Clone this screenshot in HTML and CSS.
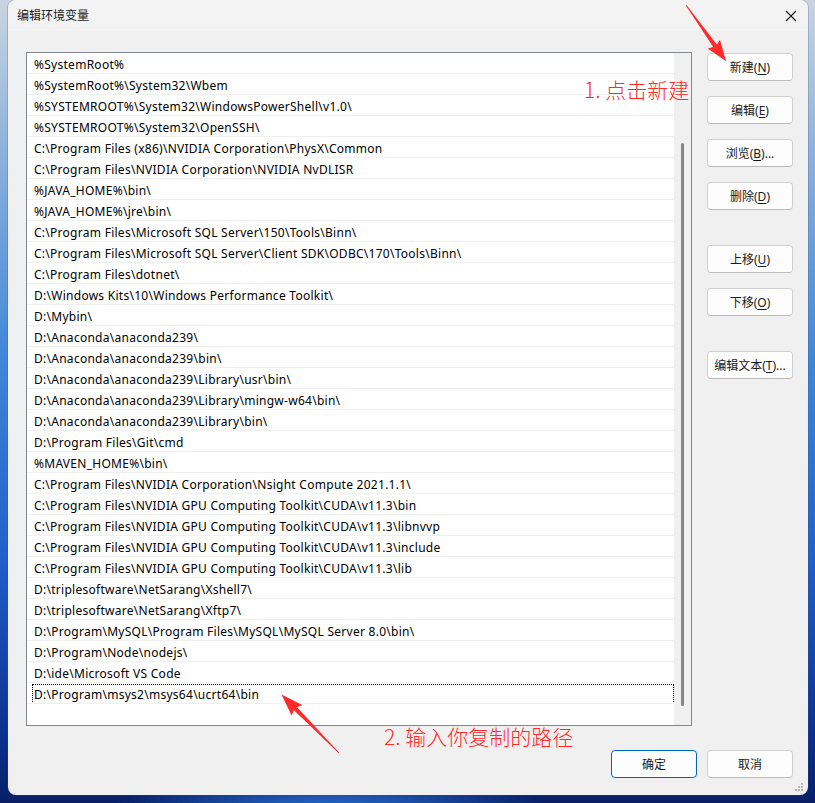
FILE: index.html
```html
<!DOCTYPE html>
<html lang="zh-CN">
<head>
<meta charset="utf-8">
<title>编辑环境变量</title>
<link rel="stylesheet" href="styles.css">
</head>
<body>
<div class="window">
  <div class="titlebar">
    <span class="title">编辑环境变量</span>
    <svg class="close" width="12" height="12" viewBox="0 0 12 12"><path d="M1 1 L11 11 M11 1 L1 11" stroke="#1a1a1a" stroke-width="1.1" fill="none"/></svg>
  </div>
  <div class="content">
    <div class="listbox">
      <ul class="rows">
        <li>%SystemRoot%</li>
        <li>%SystemRoot%\System32\Wbem</li>
        <li>%SYSTEMROOT%\System32\WindowsPowerShell\v1.0\</li>
        <li>%SYSTEMROOT%\System32\OpenSSH\</li>
        <li>C:\Program Files (x86)\NVIDIA Corporation\PhysX\Common</li>
        <li>C:\Program Files\NVIDIA Corporation\NVIDIA NvDLISR</li>
        <li>%JAVA_HOME%\bin\</li>
        <li>%JAVA_HOME%\jre\bin\</li>
        <li>C:\Program Files\Microsoft SQL Server\150\Tools\Binn\</li>
        <li>C:\Program Files\Microsoft SQL Server\Client SDK\ODBC\170\Tools\Binn\</li>
        <li>C:\Program Files\dotnet\</li>
        <li>D:\Windows Kits\10\Windows Performance Toolkit\</li>
        <li>D:\Mybin\</li>
        <li>D:\Anaconda\anaconda239\</li>
        <li>D:\Anaconda\anaconda239\bin\</li>
        <li>D:\Anaconda\anaconda239\Library\usr\bin\</li>
        <li>D:\Anaconda\anaconda239\Library\mingw-w64\bin\</li>
        <li>D:\Anaconda\anaconda239\Library\bin\</li>
        <li>D:\Program Files\Git\cmd</li>
        <li>%MAVEN_HOME%\bin\</li>
        <li>C:\Program Files\NVIDIA Corporation\Nsight Compute 2021.1.1\</li>
        <li>C:\Program Files\NVIDIA GPU Computing Toolkit\CUDA\v11.3\bin</li>
        <li>C:\Program Files\NVIDIA GPU Computing Toolkit\CUDA\v11.3\libnvvp</li>
        <li>C:\Program Files\NVIDIA GPU Computing Toolkit\CUDA\v11.3\include</li>
        <li>C:\Program Files\NVIDIA GPU Computing Toolkit\CUDA\v11.3\lib</li>
        <li>D:\triplesoftware\NetSarang\Xshell7\</li>
        <li>D:\triplesoftware\NetSarang\Xftp7\</li>
        <li>D:\Program\MySQL\Program Files\MySQL\MySQL Server 8.0\bin\</li>
        <li>D:\Program\Node\nodejs\</li>
        <li>D:\ide\Microsoft VS Code</li>
        <li class="selected"><span class="focus">D:\Program\msys2\msys64\ucrt64\bin</span></li>
      </ul>
      <div class="scrollbar"><div class="thumb"></div></div>
    </div>
    <div class="side">
      <button class="btn">新建(<u>N</u>)</button>
      <button class="btn">编辑(<u>E</u>)</button>
      <button class="btn">浏览(<u>B</u>)...</button>
      <button class="btn">删除(<u>D</u>)</button>
      <button class="btn group">上移(<u>U</u>)</button>
      <button class="btn">下移(<u>O</u>)</button>
      <button class="btn group">编辑文本(<u>T</u>)...</button>
    </div>
  </div>
  <div class="footer">
    <button class="btn default">确定</button>
    <button class="btn">取消</button>
  </div>
  <svg class="grip" width="10" height="10" viewBox="0 0 10 10">
    <rect x="7" y="1" width="2" height="2" fill="#b8b8b8"/>
    <rect x="4" y="4" width="2" height="2" fill="#b8b8b8"/>
    <rect x="7" y="4" width="2" height="2" fill="#b8b8b8"/>
    <rect x="1" y="7" width="2" height="2" fill="#b8b8b8"/>
    <rect x="4" y="7" width="2" height="2" fill="#b8b8b8"/>
    <rect x="7" y="7" width="2" height="2" fill="#b8b8b8"/>
  </svg>
</div>

<div class="note note1">1. 点击新建</div>
<div class="note note2">2. 输入你复制的路径</div>
<svg class="arrows" width="815" height="803" viewBox="0 0 815 803">
  <polygon transform="translate(686 5) rotate(54.5)" points="0,-0.4 50,-2.2 48,-7.5 69,0 48,7.5 50,2.2 0,0.4" fill="#ff2a2a"/>
  <polygon transform="translate(339 753) rotate(-134.5)" points="0,-0.4 62,-2.2 60,-7.5 82,0 60,7.5 62,2.2 0,0.4" fill="#ff2a2a"/>
</svg>
</body>
</html>
```

FILE: styles.css
```css
html, body {
  margin: 0;
  padding: 0;
}
body {
  width: 815px;
  height: 803px;
  overflow: hidden;
  position: relative;
  font-family: "Noto Sans", "Noto Sans CJK SC", sans-serif;
  font-size: 12px;
  color: #000;
  background:
    radial-gradient(ellipse 220px 40px at 330px 812px, #2a74d8 0%, rgba(42,116,216,0) 100%),
    linear-gradient(180deg, #c9d5e0 0%, #8fb4dc 18%, #3f86d8 45%, #1f5fc8 70%, #0b2f8e 92%, #081f66 100%);
}
.window {
  position: relative;
  margin-left: 8px;
  width: 800px;
  height: 795px;
  background: #f0f0f0;
  border-radius: 8px;
  overflow: hidden;
  display: flex;
  flex-direction: column;
  box-shadow: 0 0 0 1px rgba(60, 80, 110, 0.25);
}
.titlebar {
  height: 31px;
  flex: none;
  background: #f3f3f3;
  display: flex;
  align-items: center;
  justify-content: space-between;
  padding: 0 10px 0 9px;
}
.title {
  font-family: "Noto Sans CJK SC", sans-serif;
  font-size: 12px;
  color: #1a1a1a;
  position: relative;
  top: -1px;
}
.close {
  display: block;
  margin-right: 1px;
}
.content {
  display: flex;
  align-items: flex-start;
  padding: 21px 0 0 18px;
}
.listbox {
  width: 666px;
  height: 674px;
  box-sizing: border-box;
  border: 1px solid #828790;
  background: #fff;
  display: flex;
}
.rows {
  list-style: none;
  margin: 0;
  padding: 0;
  flex: 1;
  min-width: 0;
}
.rows li {
  height: 18px;
  padding-top: 2px;
  line-height: 20px;
  border-bottom: 1px solid #f0f0f0;
  padding-left: 7px;
  letter-spacing: 0.27px;
  white-space: nowrap;
  overflow: hidden;
}
.rows li.selected {
  height: 20px;
  padding-top: 0;
  padding-left: 5px;
}
.focus {
  display: block;
  box-sizing: border-box;
  height: 20px;
  margin-top: 1px;
  padding-left: 1px;
  line-height: 20px;
  border: 1px dotted #000;
}
.scrollbar {
  width: 17px;
  flex: none;
  background: #f0f0f0;
  position: relative;
}
.thumb {
  width: 3px;
  margin-left: 7px;
  margin-top: 90px;
  height: 563px;
  background: #858585;
  border-radius: 2px;
}
.side {
  display: flex;
  flex-direction: column;
  margin-left: 15px;
  padding-top: 1px;
}
.btn {
  width: 86px;
  height: 28px;
  box-sizing: border-box;
  background: #fdfdfd;
  border: 1px solid #d0d0d0;
  border-bottom-color: #bcbcbc;
  border-radius: 4px;
  font-family: "Noto Sans", "Noto Sans CJK SC", sans-serif;
  font-size: 12px;
  color: #1a1a1a;
  padding: 0;
  display: flex;
  align-items: center;
  justify-content: center;
  white-space: nowrap;
}
.side .btn + .btn {
  margin-top: 15px;
}
.side .btn.group {
  margin-top: 35px;
}
.btn u {
  text-underline-offset: 2px;
}
.btn.default {
  border: 1px solid #0067c0;
}
.footer {
  display: flex;
  justify-content: flex-end;
  gap: 10px;
  padding-right: 15px;
  margin-top: 24px;
}
.grip {
  position: absolute;
  right: 4px;
  bottom: 3px;
}
.note {
  position: absolute;
  font-family: "Noto Sans CJK SC", sans-serif;
  font-weight: 300;
  font-size: 21px;
  line-height: 24px;
  color: #ff2a2a;
  white-space: nowrap;
}
.note1 {
  left: 584px;
  top: 77px;
}
.note2 {
  left: 384px;
  top: 724px;
}
.arrows {
  position: absolute;
  left: 0;
  top: 0;
  pointer-events: none;
}
```
